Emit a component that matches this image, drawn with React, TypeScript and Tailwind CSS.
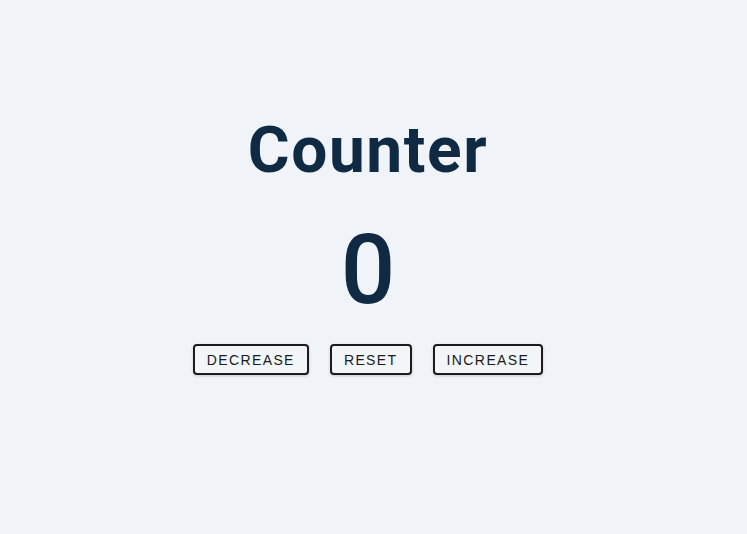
import { useState } from 'react'

export default function App() {
  const [count, setCount] = useState(0)

  return (
    <div className="min-h-screen w-full bg-[#f0f4f8] flex flex-col items-center pt-[113px] pr-[11px] font-['Roboto',sans-serif] text-[#102a43]">
      <h1 className="text-[64px] leading-[75px] font-bold tracking-[1.6px]">Counter</h1>
      <div className="mt-[34px] text-[96px] leading-[96px] font-medium">{count}</div>
      <div className="mt-[26px] flex items-center gap-[21px]">
        <CounterButton label="DECREASE" onClick={() => setCount(c => c - 1)} />
        <CounterButton label="RESET" onClick={() => setCount(0)} />
        <CounterButton label="INCREASE" onClick={() => setCount(c => c + 1)} />
      </div>
    </div>
  )
}

function CounterButton({ label, onClick }: { label: string; onClick: () => void }) {
  return (
    <button
      onClick={onClick}
      className="h-[31px] px-3 border-2 border-[#1c1c1e] rounded-[4px] bg-[#f3f6f9] shadow-[0_1px_3px_rgba(0,0,0,0.18)] font-['Liberation_Sans',Arial,sans-serif] text-[14px] leading-[18px] tracking-[1.4px] text-[#1a1a1a] cursor-pointer"
    >
      {label}
    </button>
  )
}
